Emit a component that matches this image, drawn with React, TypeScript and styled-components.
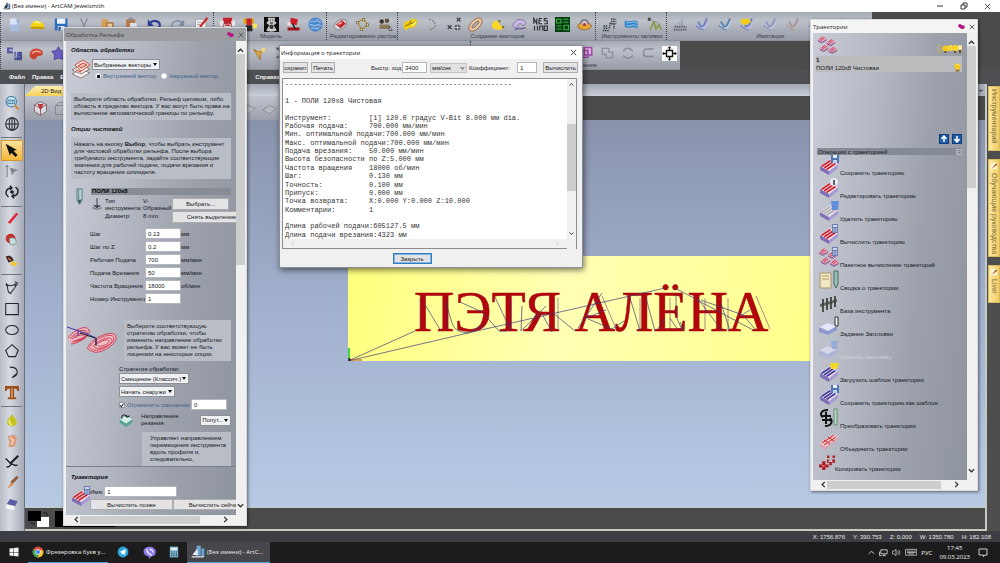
import React, { ReactNode } from 'react';
import styled, { createGlobalStyle, css } from 'styled-components';

const ui = `"Liberation Sans", Arial, sans-serif`;
const segoe = `"Open Sans", "Noto Sans", sans-serif`;

const GlobalStyle = createGlobalStyle`
  *, *::before, *::after { box-sizing: border-box; }
  body { margin: 0; background: #4b4b4b; font: 6px/8px ${ui}; color: #16181c; overflow: hidden; }
  button, input, select { font: inherit; color: inherit; margin: 0; padding: 0; border-radius: 0; }
  h2, h3, p, ul, dl, dd { margin: 0; padding: 0; font-size: inherit; }
  ul { list-style: none; }
  svg { display: block; flex: none; }
`;

/* ---------- drawings ---------- */

const layered = (stripe: string, body: string, extra?: ReactNode) => (
  <>
    <path d="M1 11 11 4l8 4v5l-9 7-9-5z" fill={body} />
    <path d="M1 11 10 16v4L1 15z" fill="#7f6fb5" />
    <path d="M10 16l9-7v4l-9 7z" fill="#a79ad2" />
    <path d="M1 11 11 4l8 5-9 7z" fill="#f4e4ea" />
    <path d="M2.500 11.500l9-6M5 13l9-6M7.500 14.500l9-6" stroke={stripe} strokeWidth="1.600" />
    {extra}
  </>
);
const disk = (
  <>
    <path d="M12 0h8v8h-8z" fill="#4f74b8" />
    <path d="M14 0h4v3h-4z" fill="#e8eefb" />
    <path d="M14 5h4v3h-4z" fill="#c3d0ea" />
  </>
);
const calc = (
  <>
    <path d="M13 0h6v9h-6z" fill="#6d7fb0" />
    <path d="M14 1h4v2h-4z" fill="#cdd8ee" />
    <path d="M14 5h4M14 7h4" stroke="#dfe5f3" strokeDasharray="1 .5" />
  </>
);
const miniLayers = (
  <>
    {[[0, 1], [9, 4], [2, 10], [11, 12]].map(([x, y]) => (
      <g key={`${x}${y}`} transform={`translate(${x} ${y})`}>
        <path d="M0 4 5 0l4 3v2L4 8 0 6z" fill="#9e6d9a" />
        <path d="M0 4 5 0l4 3-5 3z" fill="#f0b6c4" />
        <path d="M1.500 4l4-3M3 5l4-3" stroke="#c42a4c" />
      </g>
    ))}
  </>
);
const simulate = (c1: string, c2: string) => (
  <>
    <path d="M1 11l6-3 4 4 6-7 2 3-7 9-5-1z" fill={c1} />
    <path d="M4 6l4 7 4-2 4-9" stroke={c2} strokeWidth="2.500" fill="none" />
    <path d="M1 11l6 5 5 1" stroke={c2} strokeWidth="1.500" fill="none" />
  </>
);

const glyphs: Record<string, ReactNode> = {
  app: (
    <>
      <path d="M8 2h5v12H8zM14 5h4v12h-4z" fill="#53789c" />
      <path d="M2 14l7-9 1 10zM1 16h17v2H1z" fill="#1d2a3a" />
    </>
  ),
  appLight: (
    <>
      <path d="M8 1h6v14H8zM15 5h4v12h-4z" fill="#6fa4d0" />
      <path d="M2 14l7-9 1 10zM1 16h17v2H1z" fill="#e4ecf2" />
    </>
  ),
  newDoc: (
    <>
      <path d="M4 2h9l4 4v13H4z" fill="#a9bddf" />
      <path d="M4 2h9v8H4z" fill="#dbe5f6" />
      <path d="M13 2v4h4" fill="#8fa6cc" />
    </>
  ),
  open: (
    <>
      <path d="M1 13C2 6 8 3 12 6c4 0 7 4 7 8H1z" fill="#f4d312" />
      <path d="M1 13h18v3H2z" fill="#c79b06" />
      <path d="M6 8c3-2 6-1 8 1" stroke="#fff68c" strokeWidth="2" fill="none" />
    </>
  ),
  save: (
    <>
      <path d="M1 2h17v16H1z" fill="#2f6fc2" />
      <path d="M4 2h11v7H4z" fill="#eef4fd" />
      <path d="M5 12h9v6H5z" fill="#dfe4ea" />
      <path d="M6 13h3v5H6z" fill="#2b4f86" />
    </>
  ),
  cut: <path d="M5 2l6 13M14 2L8 14M5 14a2 2 0 1 0 2 3M14 14a2 2 0 1 1-3 3" stroke="#7d8590" strokeWidth="1.500" fill="none" />,
  copy: (
    <>
      <path d="M2 3h9v11H2z" fill="#d9a05c" />
      <path d="M8 7h10v11H8z" fill="#b5793d" />
      <path d="M10 9h6v7h-6z" fill="#e9c99e" />
    </>
  ),
  paste: (
    <>
      <path d="M3 3h12v15H3z" fill="#b97a4a" />
      <path d="M6 1h6v4H6z" fill="#8c8c94" />
      <path d="M8 8h9v11H8z" fill="#dcdfe8" />
    </>
  ),
  undo: (
    <>
      <path d="M4 8c4-5 14-3 13 4-1 3-3 5-6 5" stroke="#2c3f94" strokeWidth="3" fill="none" />
      <path d="M1 3v9h8z" fill="#2c3f94" />
    </>
  ),
  redo: (
    <>
      <path d="M16 8C12 3 2 5 3 12c1 3 3 5 6 5" stroke="#7f8aa6" strokeWidth="2" fill="none" />
      <path d="M19 3v9h-8z" fill="#7f8aa6" />
    </>
  ),
  notes: (
    <>
      <path d="M2 3h14v15H2z" fill="#f4f4f6" stroke="#8b8f98" />
      <path d="M18 1L8 13" stroke="#cf2a2a" strokeWidth="3" />
      <path d="M4 7h6M4 10h4" stroke="#8b8f98" />
    </>
  ),
  redTool: (
    <>
      <path d="M4 1h12v8H4z" fill="#c8202c" />
      <path d="M0 5h5v7H0zM15 5h5v7h-5z" fill="#e7e7ea" />
      <path d="M5 9h10v10H5z" fill="#eceaea" stroke="#8a2228" />
      <path d="M7 11h6M7 15h6" stroke="#c8202c" strokeWidth="2" />
    </>
  ),
  redYellow: (
    <>
      <path d="M2 2h14v7H2z" fill="#d6a413" />
      <path d="M6 2h7v9H6z" fill="#c4242d" />
      <path d="M5 11h9v8H5z" fill="#2c2a2a" />
      <path d="M14 9h6v6h-6z" fill="#f6e15a" />
    </>
  ),
  teddy: (
    <>
      <path d="M0 0h20v20H0z" fill="#0c0c0c" />
      <path d="M5 1h10l-1 4 3 3-4 3 4 7c-3 2-11 2-14 0l4-7-4-3 3-3z" fill="#c9c9c9" />
      <circle cx="10" cy="13" r="3" fill="#3a3a3a" />
      <path d="M8 4h1M11 4h1M8 8h4" stroke="#111" strokeWidth="1.500" />
    </>
  ),
  lamp: (
    <>
      <path d="M6 1l10 2-2 8-8-2z" fill="#cc1f25" />
      <path d="M2 14h16v4H2z" fill="#a3141b" />
      <path d="M9 9l3 7" stroke="#222" strokeWidth="2" />
      <circle cx="4" cy="9" r="2.500" fill="#f2d9da" />
    </>
  ),
  globeBlue: (
    <>
      <circle cx="10" cy="10" r="9.500" fill="#4f86c9" />
      <path d="M3 7c4-4 5 2 8-2s3 4 6 2M2 11c4-3 6 3 9 0s4 2 7 0M4 15c4-2 7 3 11-1" stroke="#9cc3ee" strokeWidth="1.500" fill="none" />
    </>
  ),
  rasterEdit: (
    <>
      <ellipse cx="10" cy="10" rx="9" ry="6" transform="rotate(-30 10 10)" stroke="#9b9ba2" strokeWidth="2" fill="#dad7da" />
      <path d="M4 10l8-6 5 5-7 6z" fill="#c8232b" />
      <path d="M7 10l5-3" stroke="#f0a9ad" strokeWidth="2" />
    </>
  ),
  nodes: (
    <>
      <path d="M3 7l8-4 6 7-8 7z" fill="none" stroke="#b78a23" strokeWidth="1.500" />
      <path d="M2 6h3v3H2zM10 2h3v3h-3zM15 9h3v3h-3zM7 15h3v3H7z" fill="#e5e2cf" stroke="#6d5a20" />
    </>
  ),
  family: (
    <>
      <circle cx="5" cy="6" r="3" fill="#3d3528" />
      <circle cx="12" cy="5" r="3" fill="#5c5136" />
      <path d="M2 10h13v6H2z" fill="#8a7a55" />
      <path d="M15 12l4 6h-4z" fill="#eee" stroke="#333" />
    </>
  ),
  vectorYellow: (
    <>
      <path d="M1 14V8l5-3h3l3-3 7 2-1 7-6 4-4-1-4 4z" fill="#f1cb0d" />
      <path d="M3 12l6-3 1-4M10 9l7-3" stroke="#7c5e05" strokeWidth="1.200" fill="none" />
      <path d="M12 12l5-6" stroke="#fff38a" strokeWidth="2" />
    </>
  ),
  dots: <path d="M6 3l6 3 2 5-4 5-5 1" stroke="#6c6c45" strokeWidth="1.500" strokeDasharray="2 2" fill="none" />,
  xx: (
    <>
      <path d="M13 1l5 5M18 1l-5 5M1 11l5 5M6 11l-5 5" stroke="#3c4148" strokeWidth="1.500" />
      <circle cx="14" cy="14" r="4" fill="#55595e" />
      <path d="M10 14h8M14 10v8" stroke="#ddd" />
    </>
  ),
  curveRing: (
    <>
      <ellipse cx="10" cy="10" rx="11" ry="6" transform="rotate(-45 10 10)" fill="#e6c6a0" stroke="#8c5a34" />
      <ellipse cx="10" cy="10" rx="6" ry="2" transform="rotate(-45 10 10)" fill="#a9aebb" stroke="#8c5a34" />
    </>
  ),
  yellowBlob: (
    <>
      <path d="M3 9c2-5 8-5 9-1s6 3 6 6-8 4-12 2-4-4-3-7z" fill="#f7d629" />
      <path d="M11 4h3v3h-3zM16 12h3v3h-3z" fill="#7a6f36" />
    </>
  ),
  weave: (
    <>
      <path d="M1 12C4 1 14 1 19 8l-4 4C12 7 7 8 6 16z" fill="#c9b9e2" stroke="#75609c" />
      <path d="M4 17c5-4 9 1 14-3" stroke="#75609c" strokeWidth="2" fill="none" />
    </>
  ),
  nesting: (
    <path
      d="M1 9V2l4 7V2M8 2h4M8 2v7h4M8 5h3M19 2h-4v3h4v4h-4M2 12v6M6 12v6M9 12h4v6M9 12v6M15 12h4v6h-4z"
      stroke="#2b2c30"
      strokeWidth="1.500"
      fill="none"
    />
  ),
  greenGrid: (
    <>
      <path d="M0 0h20v20H0z" fill="#083a10" />
      <path d="M2 3h6v5H2zM11 3h7M11 7h7M2 12h7M2 16h7M12 11h6v6h-6z" stroke="#33b64a" strokeWidth="1.500" fill="none" />
    </>
  ),
  ringGold: (
    <>
      <ellipse cx="10" cy="12" rx="9" ry="5" fill="#e2a53b" stroke="#8a5c14" />
      <path d="M5 10c0-8 10-8 10 0" stroke="#7a7380" strokeWidth="2" fill="#d8c6c6" />
      <circle cx="10" cy="10" r="2" fill="#a33" />
    </>
  ),
  fillA: (
    <path
      d="M1 18h8M2 15h6M2 12h6M12 3h7M12 6h7M12 9h7M9 15c3-2 0-6 3-8M16 9v7"
      stroke="#36403a"
      strokeWidth="1.800"
      strokeDasharray="2 1"
      fill="none"
    />
  ),
  fillB: (
    <>
      <path d="M1 4c6 5 8-2 17 2v9c-9-4-11 2-17-2z" fill="#2e86c9" />
      <path d="M3 7c5 3 7-3 14 1M3 11c5 3 8-3 14 1" stroke="#bfe0f6" fill="none" />
    </>
  ),
  fillC: (
    <>
      <path d="M1 1h4v4H1z" fill="#454b3a" />
      <path d="M4 17l5-10 3 9 4-6 3 7" stroke="#87963b" strokeWidth="2" fill="none" />
      <path d="M7 5l9 3" stroke="#555" strokeDasharray="1 1" />
    </>
  ),
  sim1: (
    <>
      <path d="M1 17h18M2 13h16" stroke="#5e6370" strokeWidth="2.500" strokeDasharray="2 1" />
      <path d="M12 2v9l-5-3" stroke="#97a0ba" strokeWidth="2" fill="none" />
    </>
  ),
  sim2: simulate('#b8bfe0', '#7480c0'),
  sim3: simulate('#b9c6d8', '#5f87b0'),
  sim4: (
    <>
      {simulate('#b8bfe0', '#7480c0')}
      <path d="M1 3l10-1 4 5-9 4-5-3z" fill="#f1cd19" />
    </>
  ),
  sim5: simulate('#c0c5d8', '#8f98bd'),
  sim6: simulate('#c4babd', '#a2979c'),
  sim7: <path d="M1 12c5-5 9 5 17-1l-4 6c-6 2-9-3-13-5z" fill="#b7bdd8" stroke="#7881ab" />,
  blocks: (
    <>
      <path d="M0 2h8v8H0z" fill="#5a5f9e" />
      <path d="M10 8h10v11H10z" fill="#474c8c" />
      <path d="M3 5l10 2-1 9" stroke="#b8bde8" strokeWidth="2" fill="none" />
      <path d="M12 11h6M12 14h6" stroke="#7479b4" />
    </>
  ),
  redLeaf: (
    <>
      <path d="M1 10C3 3 12 1 18 7c2 5-2 7-6 6l-4 5c-5 0-8-4-7-8z" fill="#c9442f" />
      <path d="M4 10c3-4 8-4 12-1" stroke="#f3a99a" strokeWidth="2" fill="none" />
    </>
  ),
  purpleStar: <path d="M10 1l3 5 6 1-4 5 1 6-6-2-6 2 1-6-4-5 6-1z" fill="#6a5fc0" stroke="#3f3892" />,
  goldVec: (
    <>
      <path d="M2 4l7 4 8-3-6 6v7l-4-6z" fill="#e1a83f" stroke="#9b6b18" />
      <circle cx="15" cy="5" r="3" fill="#f5d27c" />
    </>
  ),
  twist: <path d="M3 3c8 0 3 9 12 7M4 16c4-6 9 2 13-3" stroke="#5c616a" strokeWidth="3" fill="none" />,
  cubePink: <path d="M3 6h9v9H3zM7 2h10v10H7z" stroke="#a04aa8" strokeWidth="2" fill="#dcb3e0" />,
  join: <path d="M3 3h9v5h5v8H8v-5H3z" stroke="#80858f" strokeWidth="1.500" fill="none" />,
  wave: <path d="M3 7c5-7 9-3 13 0M3 13c5 6 9 3 13 0" stroke="#868b95" strokeWidth="2" fill="none" />,
  cshape: <path d="M17 4H7c-5 0-5 10 0 10h10" stroke="#868b95" strokeWidth="2" fill="none" />,
  center: (
    <>
      <path d="M0 0h20v20H0z" fill="#fbfbfb" />
      <path d="M6 6h8v8H6zM10 1v4M10 15v4M1 10h4M15 10h4" stroke="#111" strokeWidth="1.800" fill="none" />
      <path d="M8 3l2-2 2 2M8 17l2 2 2-2M3 8l-2 2 2 2M17 8l2 2-2 2" stroke="#111" fill="none" />
    </>
  ),
  view3d: (
    <>
      <path d="M2 5l8-4 8 4v9l-8 5-8-5z" fill="#d9dce2" stroke="#7a4a4e" />
      <path d="M10 10v9M2 5l8 5 8-5" stroke="#7a4a4e" fill="none" />
      <path d="M6 4h8l-4 9z" fill="#c0303c" />
    </>
  ),
  cube: <path d="M2 6h11v12H2zM2 6l5-4h11v12l-5 4M13 6l5-4" stroke="#80858f" strokeWidth="1.200" fill="none" />,
  slab: <path d="M1 12l9-6 9 4-9 7z" fill="#b4b9bd" stroke="#7f8588" />,
  zoom: (
    <>
      <circle cx="9" cy="8" r="7.500" fill="#cfe2f0" stroke="#4a86a8" strokeWidth="1.500" />
      <path d="M4 6h10v5H4zM7 6v5M11 6v5" stroke="#2e79a0" strokeWidth="1.200" fill="none" />
      <path d="M14 13l5 6" stroke="#d78a35" strokeWidth="3" />
    </>
  ),
  globe: (
    <g fill="none" stroke="#23252a" strokeWidth="1.500">
      <circle cx="10" cy="10" r="9" />
      <ellipse cx="10" cy="10" rx="4" ry="9" />
      <path d="M1 10h18M10 1v18" />
    </g>
  ),
  pointer: <path d="M1 1l16 9-5 1 6 6-3 3-6-6-2 4z" fill="#111" />,
  pointerGrey: (
    <>
      <path d="M3 2v17M1 4l2-2 2 2" stroke="#7d828b" strokeWidth="1.500" fill="none" />
      <path d="M7 5l12 4-6 2-3 5z" fill="#7d828b" />
    </>
  ),
  transform: (
    <g stroke="#1d1e21" fill="none" strokeWidth="2">
      <path d="M5 17C-1 13 1 5 9 4M15 3c6 4 4 12-4 13" />
      <path d="M10 7v6M7 10h6" />
      <path d="M7 1l3 3-3 3M13 13l-3 3 3 3" />
    </g>
  ),
  redPencil: (
    <>
      <path d="M16 1l3 2L7 17l-3-2z" fill="#e0243a" />
      <path d="M4 15l3 2-4 2z" fill="#f2cfae" />
    </>
  ),
  paint: (
    <>
      <circle cx="8" cy="8" r="7" fill="#c9302c" />
      <path d="M6 8c6-3 10 0 10 5 0 4-7 5-9 3z" fill="#c7ddd8" stroke="#5d7f78" />
    </>
  ),
  brush: (
    <>
      <path d="M1 4c5-4 11 0 11 6L5 12z" fill="#3a2320" />
      <path d="M10 10l8 3-3 5-8-3z" fill="#f0c93a" />
      <path d="M4 6l5 3" stroke="#c96a5a" strokeWidth="2" />
    </>
  ),
  vector: <path d="M2 5c5 3 9 2 13-1M2 5c4 3-1 10 6 13 2-6 8-6 7-14M14 1l4 2-3 5M2 3v4" stroke="#2a2c30" strokeWidth="1.500" fill="none" />,
  rect: <path d="M1 2h18v16H1z" stroke="#23252a" strokeWidth="1.500" fill="none" />,
  ellipse: <ellipse cx="10" cy="10" rx="9" ry="6.500" stroke="#23252a" strokeWidth="1.500" fill="none" />,
  polygon: <path d="M10 1l9 8-4 9H5L1 9z" stroke="#23252a" strokeWidth="1.500" fill="none" />,
  arc: <path d="M7 3c14 0 13 12 3 15l7-6" stroke="#23252a" strokeWidth="1.500" fill="none" />,
  typeTool: (
    <>
      <path d="M0 0h20v7h-2l-2-3h-3v12h3v3H4v-3h3V4H4L2 7H0z" fill="#9c4f1c" />
      <path d="M9 3h2v14H9z" fill="#e6a05c" />
    </>
  ),
  drop: (
    <>
      <path d="M10 1c2 5 7 8 7 12 0 8-14 8-14 0 0-4 5-7 7-12z" fill="#c8c41f" />
      <path d="M7 10c-2 3 0 6 3 7" stroke="#f7f6a8" strokeWidth="2" fill="none" />
    </>
  ),
  hand: (
    <>
      <path d="M4 3l10-2 3 7-3 10-9 1 1-8z" fill="#d99a7c" />
      <path d="M7 5l5 4-3 6" stroke="#f4cfb6" strokeWidth="2.500" fill="none" />
    </>
  ),
  ink: (
    <>
      <path d="M19 1L7 13" stroke="#1d1d20" strokeWidth="3" />
      <path d="M1 5l6 6M2 17c6 1 5-4 8-4s4 4 8 1" stroke="#1d1d20" strokeWidth="2" fill="none" />
    </>
  ),
  knife: (
    <>
      <path d="M18 1L9 10" stroke="#8f5a38" strokeWidth="4" />
      <path d="M9 9l3 3-9 7z" fill="#e08a4a" />
    </>
  ),
  eraser: (
    <>
      <path d="M7 3l11 3-4 8L2 11z" fill="#5a5fa6" />
      <path d="M2 10l12 3-1 6L1 16z" fill="#f4f4f6" />
    </>
  ),
  sheets: (
    <g strokeWidth="1">
      <path d="M1 15l9-5 9 4-9 5z" fill="#f4efec" stroke="#8b7f80" />
      <path d="M1 11l9-5 9 4-9 5z" fill="#f3e2d8" stroke="#8b7f80" />
      <path d="M4 6l8-5 7 5-9 6z" fill="#fbe9e2" stroke="#cc5248" />
      <path d="M7 7l5-3 4 2-6 3zM5 11l5 2" fill="#f4bdb2" stroke="#cc3f36" />
    </g>
  ),
  pen: (
    <>
      <path d="M7 1h6v13l-3 5-3-5z" fill="#b9d3d6" stroke="#4d7177" />
      <path d="M9 2v11M8 14h4l-2 5z" stroke="#4d7177" fill="#35545a" />
    </>
  ),
  drill: (
    <>
      <path d="M9 0h2v12H9z" fill="#4f545c" />
      <path d="M3 12h14l-7 5z" fill="#3c4047" />
      <path d="M2 16l8 3 8-3" stroke="#777c86" strokeWidth="2" fill="none" />
    </>
  ),
  box3d: (
    <>
      <path d="M1 9l9-5 9 5v5l-9 6-9-6z" fill="#5aa493" />
      <path d="M1 9l9-5 9 5-9 6z" fill="#d7f0e7" />
      <path d="M4 8C3 2 11 1 12 6M12 6l3-2M12 6l-3-2" stroke="#1c2c28" strokeWidth="1.500" fill="none" />
    </>
  ),
  saveTp: layered('#c8232f', '#b8a8d8', disk),
  editTp: layered('#c8232f', '#b8a8d8', <><circle cx="15" cy="4" r="4" fill="#e6e9ef" /><path d="M15 2v5" stroke="#333" strokeWidth="1.500" /></>),
  delTp: layered('#a9aeb8', '#cfd2dc', <path d="M12 0h8l-1 9h-6z" fill="#5f8fd8" />),
  calcTp: layered('#c8232f', '#b8a8d8', calc),
  loadTp: layered('#3d3a9c', '#a9b0e6', <path d="M11 1h9l-2 6h-6z" fill="#f1d622" />),
  tplTp: layered('#3d3a9c', '#a9b0e6', disk),
  batchTp: <>{miniLayers}{calc}</>,
  multi: miniLayers,
  summary: (
    <>
      <path d="M1 3h11v15H1z" fill="#efe6c4" stroke="#a8966a" />
      <path d="M3 6h7M3 9h7" stroke="#b89c64" />
      <path d="M15 1h4v13l-2 4-2-4z" fill="#9cc0b4" stroke="#44695e" />
    </>
  ),
  tooldb: (
    <>
      <path d="M1 11l17-5v3L1 14z" fill="#62675f" />
      <path d="M4 6v13M8 5v12M12 4v12M16 3v11" stroke="#3e443d" strokeWidth="1.800" />
    </>
  ),
  stock: (
    <>
      <path d="M0 11l9-4 9 3v4l-9 5-9-3z" fill="#8f97cf" />
      <path d="M0 11l9-4 9 3-9 5z" fill="#e4e6f6" />
      <path d="M16 1h3v9h-3z" fill="#eee" stroke="#333" />
    </>
  ),
  stockOff: (
    <g opacity=".7">
      <path d="M0 11l9-4 9 3v4l-9 5-9-3z" fill="#a8b1de" />
      <path d="M0 11l9-4 9 3-9 5z" fill="#dfe2f2" />
      <path d="M12 2h7l-1 8h-5z" fill="#86a7e0" />
    </g>
  ),
  transformTp: (
    <>
      <g stroke="#111" fill="none" strokeWidth="2">
        <path d="M9 2C2 2 0 7 4 9M6 18c7 0 8-5 5-8M2 8h10M3 12h10M7 4v12" />
      </g>
      <path d="M15 1h3v16h-3z" fill="#b8dcc6" stroke="#5f8d72" />
    </>
  ),
  mergeTp: (
    <>
      <path d="M1 12L14 3l5 3v3L6 19l-5-3z" fill="#d5a8b4" />
      <path d="M1 12L14 3l5 3L6 16z" fill="#f3c8c8" />
      <path d="M3 12l12-8M5 14l12-8M5 9l6 4M9 6l6 4" stroke="#c8232f" />
    </>
  ),
  copyTp: (
    <>
      <path d="M4 9h4v4h4v4H8v3H4v-3H0v-4h4z" fill="#b01c20" />
      <path d="M10 2h3v3h-3zM17 2h3v3h-3zM10 7h3v3h3V7h4v4h-4v3h-3v-3h-3z" fill="#b01c20" />
      <path d="M4 15h4M12 9h5" stroke="#fff" strokeDasharray="2 1" />
    </>
  ),
  bulb: (
    <>
      <path d="M10 1c9 0 8 8 4 11v3H6v-3C2 9 1 1 10 1z" fill="#f6c81c" />
      <path d="M6 15h8v4H6z" fill="#8a6d2c" />
      <path d="M7 4c2-2 5-1 6 1" stroke="#fff8b0" strokeWidth="2" fill="none" />
    </>
  ),
  bulbs: (
    <>
      <path d="M2 3h5v13H2z" fill="none" stroke="#d1b546" strokeWidth="1.500" />
      <circle cx="17" cy="9" r="6" fill="#f4cb1f" />
      <circle cx="27" cy="8" r="6" fill="#f6d83c" />
      <circle cx="37" cy="8" r="6" fill="#f8d428" />
      <circle cx="46" cy="7" r="5" fill="#fbe89b" />
      <path d="M15 14h4v4h-4zM34 14h4v4h-4zM44 12h4v6h-4z" fill="#6d4c1c" />
    </>
  ),
  pin: <path d="M1 6c2-5 8-4 9 0l9 2v7l-8 3-5-4C1 13 0 10 1 6z" fill="#b5178b" />,
  chrome: (
    <>
      <circle cx="10" cy="10" r="9" fill="#dd4b3e" />
      <path d="M2.200 5.500A9 9 0 0 0 9 19l4-7z" fill="#3aa757" />
      <path d="M18.500 7A9 9 0 0 1 9 19l4-7-1-5z" fill="#fbc116" />
      <circle cx="10" cy="10" r="4.500" fill="#fff" />
      <circle cx="10" cy="10" r="3.500" fill="#4285f4" />
    </>
  ),
  telegram: (
    <>
      <circle cx="10" cy="10" r="9" fill="#2ba3dd" />
      <path d="M4 10l11-5-2 10-4-2-1 2-1-4z" fill="#fff" />
    </>
  ),
  viber: (
    <>
      <path d="M10 1c13 0 12 15 3 15l-4 4v-4C-2 15-2 1 10 1z" fill="#8e7be8" />
      <path d="M6 5c0 5 4 8 8 9M10 5c3 0 5 2 5 5" stroke="#fff" strokeWidth="1.800" fill="none" />
    </>
  ),
  calcApp: (
    <>
      <path d="M3 1h14v18H3z" fill="#7fb6c9" />
      <path d="M5 3h10v4H5z" fill="#e8f4f8" />
      <path d="M5 10h10M5 13h10M5 16h10" stroke="#23586c" strokeWidth="2" strokeDasharray="2 2" />
    </>
  ),
  start: <path d="M1 3l8-1v8H1zM10 2l9-1v9h-9zM1 11h8v7l-8-1zM10 11h9v8l-9-1z" fill="#f4f4f4" />,
  monitor: <path d="M4 4h14v9H4zM8 17h7M11 13v4M1 8v9h5" stroke="#e4e4e4" strokeWidth="1.800" fill="none" />,
  volume: <path d="M1 7h3l5-4v14l-5-4H1zM12 7c2 2 2 4 0 6M15 4c3 4 3 8 0 12" stroke="#e4e4e4" strokeWidth="1.500" fill="none" />,
  keyboard: <path d="M1 3h25v13H1zM4 7h20M4 10h20M7 13h13" stroke="#e4e4e4" strokeWidth="1.500" fill="none" />,
  notice: <path d="M2 2h16v12h-4l-3 3v-3H2z" stroke="#e4e4e4" strokeWidth="1.800" fill="none" />,
  note: (
    <>
      <path d="M2 2h16v16H2z" fill="#fff6cf" />
      <path d="M4 17L16 3l2 4z" fill="#a8322a" />
    </>
  ),
};

const Glyph = ({ name, size = 15, vw = 20 }: { name: string; size?: number; vw?: number }) => (
  <svg width={(size * vw) / 20} height={size} viewBox={`0 0 ${vw} 20`} aria-hidden="true">
    {glyphs[name]}
  </svg>
);

const Stroke = ({ d, size = 8, color = '#333', weight = 1 }: { d: string; size?: number; color?: string; weight?: number }) => (
  <svg width={size} height={size} viewBox="0 0 8 8" fill="none" stroke={color} strokeWidth={weight} aria-hidden="true">
    <path d={d} />
  </svg>
);
const arrows = {
  up: 'M1 5.500 4 2.500l3 3',
  down: 'M1 2.500 4 5.500l3-3',
  left: 'M5.500 1 2.500 4l3 3',
  right: 'M2.500 1 5.500 4l-3 3',
  close: 'M1 1l6 6M7 1 1 7',
};

/* ---------- frame ---------- */

const Screen = styled.div`
  position: relative;
  display: flex;
  flex-direction: column;
  height: 100vh;
  overflow: hidden;
`;
const TitleBar = styled.header`
  display: flex;
  align-items: center;
  height: 12px;
  flex: none;
  padding: 0 9px 0 3px;
  gap: 1px;
  background: #fff;
  color: #111;
  font-family: ${segoe};
`;
const WindowButtons = styled.div`
  display: flex;
  gap: 16px;
  margin-left: auto;
`;
const PlainButton = styled.button`
  display: grid;
  place-items: center;
  border: 0;
  background: none;
`;
const ToolRow = styled.div<{ $w: string }>`
  display: flex;
  flex: none;
  width: ${(p) => p.$w};
  height: 29px;
  border-bottom: 1px solid #8b909b;
  background: linear-gradient(#a3a8b2, #bcc1ca 30%, #a6abb5 70%, #989da8);
`;
const ToolGroup = styled.div<{ $w: number }>`
  width: ${(p) => p.$w}px;
  flex: none;
  display: flex;
  flex-direction: column;
  padding: 4px 0 0 2px;
  border-left: 1px dotted #3b3e44;
`;
const ToolIcons = styled.div`
  display: flex;
  justify-content: space-around;
  align-items: center;
  height: 16px;
`;
const GroupLabel = styled.span`
  text-align: center;
  color: #3d4148;
  line-height: 8px;
  white-space: nowrap;
`;
const MenuBar = styled.nav`
  display: flex;
  gap: 7px;
  flex: none;
  height: 14px;
  padding-left: 9px;
  background: #4e4f52;
  button {
    border: 0;
    background: none;
    color: #f2f2f2;
    font-weight: bold;
  }
`;
const MenuGap = styled.span`
  width: 169px;
`;
const Workspace = styled.main`
  display: flex;
  flex: 1;
  min-height: 0;
`;
const Palette = styled.aside`
  width: 25px;
  flex: none;
  display: flex;
  flex-direction: column;
  justify-content: space-between;
  padding: 6px 2px 17px 1px;
  border-right: 1px solid #6b6f78;
  background: linear-gradient(90deg, #b9bdc7, #d6d9e0 40%, #a5aab6);
`;
const PaletteGroup = styled.div`
  padding-top: 2px;
  & + & {
    border-top: 1px solid #6f747e;
  }
`;
const PaletteButton = styled(PlainButton)<{ $on?: boolean }>`
  width: 22px;
  height: 21px;
  ${(p) => p.$on && css`background: linear-gradient(#fbe29c, #f5b73c); border: 1px solid #d69a2e;`}
`;
const Document = styled.section`
  flex: 1;
  min-width: 0;
  display: flex;
  flex-direction: column;
  border-right: 2px solid #c6cac0;
  border-bottom: 2px solid #c6cac0;
`;
const DocTabs = styled.div`
  display: flex;
  justify-content: space-between;
  align-items: end;
  flex: none;
  height: 12px;
  background: linear-gradient(#a3a8b3, #c9cfd8);
`;
const DocTab = styled.button`
  height: 10px;
  width: 80px;
  padding-left: 16px;
  border: 0;
  text-align: left;
  background: linear-gradient(#fdeeb0, #f8d259);
  clip-path: polygon(0 100%, 10px 0, 100% 0, 100% 100%);
`;
const TabMenu = styled(PlainButton)`
  width: 9px;
  height: 11px;
  background: #a9aebb;
`;
const ViewBar = styled.div`
  flex: none;
  height: 24px;
  background: #4b4b4b;
`;
const ViewTools = styled.div`
  display: flex;
  align-items: center;
  gap: 6px;
  width: 50%;
  height: 24px;
  padding-left: 8px;
  background: linear-gradient(#c0c4cd, #9a9fab);
`;
const ViewGap = styled.span`
  width: 160px;
`;
const Canvas = styled.div`
  position: relative;
  flex: 1;
  min-height: 0;
  overflow: hidden;
  background: linear-gradient(#8a93ac, #a0afcb 45%, #b7cae4);
`;
const Relief = styled.svg`
  position: absolute;
  left: 323px;
  top: 136px;
  background: linear-gradient(100deg, #ffff7c, #ffffb4 45%, #ffff9c 75%, #ffff86);
`;
const ColourBar = styled.div`
  flex: none;
  height: 22px;
  display: flex;
  gap: 6px;
  padding: 3px 3px;
  border-top: 1px solid #c6cac0;
  background: #4b4b4b;
`;
const SideTabs = styled.aside`
  width: 13px;
  flex: none;
  display: flex;
  flex-direction: column;
  gap: 8px;
  padding: 2px 0 0 1px;
  background: #4e4e4e;
`;
const SideTab = styled.button<{ $h: number }>`
  display: flex;
  align-items: center;
  gap: 3px;
  height: ${(p) => p.$h}px;
  width: 12px;
  padding: 2px 0;
  border: 1px solid #d9bb63;
  background: linear-gradient(90deg, #fbe7a4, #f3cd62);
  color: #7b6a3a;
  writing-mode: vertical-rl;
  font: 7px/8px ${ui};
  white-space: nowrap;
`;
const StatusBar = styled.footer`
  display: flex;
  justify-content: flex-end;
  align-items: center;
  gap: 8px;
  flex: none;
  height: 11px;
  padding-right: 9px;
  background: #3d3e43;
  color: #e6e6e6;
`;
const TaskBar = styled.footer`
  display: flex;
  align-items: center;
  flex: none;
  height: 21px;
  background: #1c1c1c;
  color: #f0f0f0;
  font-family: ${segoe};
`;
const TaskButton = styled.button<{ $w: number; $state?: 'open' | 'active' }>`
  display: flex;
  align-items: center;
  justify-content: ${(p) => (p.$state ? 'flex-start' : 'center')};
  gap: 2px;
  width: ${(p) => p.$w}px;
  height: 21px;
  padding: 0 4px;
  border: 0;
  border-bottom: 1px solid ${(p) => (p.$state ? '#5a9fd8' : 'transparent')};
  background: ${(p) => (p.$state === 'active' ? '#45474a' : 'none')};
  white-space: nowrap;
`;
const Tray = styled.div`
  display: flex;
  align-items: center;
  gap: 4px;
  margin-left: auto;
  padding-right: 12px;
`;
const Clock = styled.time`
  margin: 0 4px 0 3px;
  text-align: center;
  line-height: 9px;
`;

/* ---------- shared controls ---------- */

const Button = styled.button<{ $w?: number; $h?: number; $focus?: boolean }>`
  flex: none;
  width: ${(p) => p.$w}px;
  height: ${(p) => p.$h ?? 11}px;
  border: 1px solid ${(p) => (p.$focus ? '#2f7fc8' : '#adadad')};
  ${(p) => p.$focus && css`box-shadow: inset 0 0 0 1px #7fb2de;`}
  background: #e3e3e5;
  white-space: nowrap;
  overflow: hidden;
  line-height: 8px;
`;
const Field = styled.input<{ $w: number }>`
  width: ${(p) => p.$w}px;
  height: 11px;
  padding: 0 2px;
  border: 1px solid #b4b7bd;
  background: #fff;
`;
const SelectBox = styled.span<{ $w: number; $flat?: boolean }>`
  display: inline-grid;
  align-items: center;
  width: ${(p) => p.$w}px;
  height: ${(p) => (p.$flat ? 10 : 11)}px;
  select,
  &::after {
    grid-area: 1 / 1;
  }
  select {
    appearance: none;
    width: 100%;
    height: 100%;
    padding: 0 1px;
    border: 1px solid ${(p) => (p.$flat ? '#c2c2c2' : '#8d9097')};
    background: ${(p) => (p.$flat ? '#e1e1e1' : '#eff0f2')};
  }
  &::after {
    content: '';
    justify-self: end;
    margin-right: 3px;
    pointer-events: none;
    ${(p) =>
      p.$flat
        ? css`width: 3px; height: 3px; border: solid #666; border-width: 0 1px 1px 0; transform: rotate(45deg);`
        : css`border: 2px solid transparent; border-top: 3px solid #111; border-bottom: 0;`}
  }
`;
const Select = ({ w, value, label, flat }: { w: number; value: string; label: string; flat?: boolean }) => (
  <SelectBox $w={w} $flat={flat}>
    <select aria-label={label} defaultValue={value}>
      <option>{value}</option>
    </select>
  </SelectBox>
);

const Panel = styled.section`
  position: absolute;
  display: grid;
  grid-template-columns: 1fr 9px;
  grid-template-rows: 13px 1fr 9px;
  padding: 0 1px 1px 2px;
  background: #f0f0f0;
  border: 1px solid #d9dbdf;
  box-shadow: 1px 1px 3px rgba(0, 0, 0, 0.5);
`;
const ProcessPanel = styled(Panel)`
  left: 63px;
  top: 27px;
  bottom: 37px;
  width: 184px;
`;
const ToolpathPanel = styled(Panel)`
  right: 22px;
  top: 19px;
  bottom: 72px;
  width: 168px;
`;
const PanelTitle = styled.div<{ $dim?: boolean }>`
  grid-column: 1 / -1;
  display: flex;
  align-items: center;
  gap: 4px;
  margin: 0 -1px 0 -2px;
  padding: 0 2px 0 2px;
  background: ${(p) => (p.$dim ? '#9c9ea2' : '#f4f4f5')};
  color: ${(p) => (p.$dim ? '#3c3d40' : '#222')};
  font-family: ${segoe};
  h2 {
    flex: 1;
    font-weight: normal;
  }
`;
const PanelBody = styled.div`
  min-width: 0;
  min-height: 0;
  overflow: hidden;
  background: linear-gradient(95deg, #c9ccd6, #b4b8c3 35%, #9ca1ac 65%, #8f959f);
`;
const ScrollTrack = styled.div<{ $row?: boolean }>`
  display: flex;
  flex-direction: ${(p) => (p.$row ? 'row' : 'column')};
  justify-content: space-between;
  align-items: center;
  ${(p) => (p.$row ? 'padding: 0 7px;' : 'padding: 6px 0;')}
  background: #f0f0f0;
`;
const Thumb = styled.div<{ $row?: boolean; $size: string }>`
  ${(p) =>
    p.$row
      ? css`width: ${p.$size}; height: 8px; margin-right: auto;`
      : css`height: ${p.$size}; width: 9px; margin-bottom: auto;`}
  background: #cdcdcd;
`;
const Scroll = ({ row, size, color }: { row?: boolean; size: string; color?: string }) => (
  <ScrollTrack $row={row}>
    <Stroke d={row ? arrows.left : arrows.up} color={color} size={7} weight={1.500} />
    <Thumb $row={row} $size={size} />
    <Stroke d={row ? arrows.right : arrows.down} color={color} size={7} weight={1.500} />
  </ScrollTrack>
);

/* ---------- relief processing panel ---------- */

const Section = styled.div<{ $pt?: number }>`
  padding: ${(p) => p.$pt ?? 5}px 5px 0;
`;
const Heading = styled.h3`
  font-weight: bold;
  font-style: italic;
  color: #0c0d10;
`;
const Info = styled.div<{ $indent?: number; $ml?: number }>`
  margin: 5px 0 0 ${(p) => p.$ml ?? 0}px;
  padding: 3px 0 3px ${(p) => p.$indent ?? 3}px;
  line-height: 7px;
  white-space: pre;
  background: #b9bdc6;
  overflow: hidden;
`;
const Columns = styled.div<{ $first: number; $mt?: number }>`
  display: grid;
  grid-template-columns: ${(p) => p.$first}px 1fr;
  margin-top: ${(p) => p.$mt ?? 0}px;
  & > * {
    min-width: 0;
  }
`;
const Radios = styled.div`
  display: flex;
  gap: 5px;
  margin: 2px 0 8px 3px;
`;
const Check = styled.label`
  display: flex;
  align-items: center;
  gap: 2px;
  height: 8px;
  color: #44658f;
  white-space: nowrap;
  input {
    appearance: none;
    display: grid;
    place-items: center;
    width: 6px;
    height: 6px;
    background: #fff;
    border: 1px solid #8f959f;
  }
  input[type='radio'] {
    border-radius: 3px;
    border-color: #e6e8ec;
  }
  input:checked::after {
    content: '';
    width: 3px;
    height: 3px;
    background: #15181d;
  }
  input[type='checkbox']:checked::after {
    width: 2px;
    height: 4px;
    background: none;
    border: solid #15181d;
    border-width: 0 1px 1px 0;
    transform: rotate(40deg);
  }
`;
const ToolName = styled.h3`
  height: 7px;
  padding-left: 1px;
  line-height: 7px;
  background: #878c95;
  color: #060708;
`;
const ToolCard = styled.div`
  display: grid;
  grid-template-columns: 14px 38px 29px 1fr;
  margin: 3px -5px 0 0;
  line-height: 7px;
`;
const Stack = styled.div<{ $gap?: number }>`
  display: flex;
  flex-direction: column;
  align-items: flex-start;
  gap: ${(p) => p.$gap ?? 1}px;
`;
const Param = styled.label`
  display: grid;
  grid-template-columns: 55px 36px 1fr;
  align-items: center;
  height: 13px;
  white-space: nowrap;
`;
const Row = styled.div<{ $gap?: number; $mt?: number }>`
  display: flex;
  align-items: center;
  gap: ${(p) => p.$gap ?? 2}px;
  margin-top: ${(p) => p.$mt ?? 0}px;
  white-space: nowrap;
`;
const CutLabel = styled.span`
  width: 64px;
  padding-left: 6px;
  line-height: 7px;
`;
const Divider = styled.hr`
  margin: 0 0 6px;
  border: 0;
  border-top: 1px solid #7b808a;
`;
const StrategyDrawing = styled.svg`
  margin: 11px 0 0 -5px;
`;

const params: [string, string, string][] = [
  ['Шаг', '0.13', 'мм'],
  ['Шаг по Z', '0.2', 'мм'],
  ['Рабочая Подача', '700', 'мм/мин'],
  ['Подача Врезания', '50', 'мм/мин'],
  ['Частота Вращения', '18000', 'об/мин'],
  ['Номер Инструмента', '1', ''],
];

const ReliefProcessing = () => (
  <ProcessPanel>
    <PanelTitle $dim>
      <h2>Обработка Рельефа</h2>
      <PlainButton aria-label="Закрепить"><Glyph name="pin" size={7} /></PlainButton>
      <PlainButton aria-label="Закрыть панель"><Stroke d={arrows.close} size={6} color="#444" /></PlainButton>
    </PanelTitle>
    <PanelBody>
      <Section>
        <Heading>Область обработки</Heading>
        <Columns $first={21} $mt={5}>
          <Glyph name="sheets" size={20} />
          <div>
            <Row><Select w={68} value="Выбранные векторы" label="Область" /></Row>
            <Radios>
              <Check><input type="radio" name="side" defaultChecked />Внутренний вектор</Check>
              <Check><input type="radio" name="side" />Наружный вектор</Check>
            </Radios>
          </div>
        </Columns>
        <Info>{'Выберите область обработки. Рельеф целиком, либо\nобласть в пределах вектора. У вас могут быть права на\nвычисление автоматической границы по рельефу.'}</Info>
      </Section>
      <Section>
        <Heading>Опции чистовой</Heading>
        <Info>
          <div>Нажать на кнопку <b>Выбор</b>, чтобы выбрать инструмент</div>
          <div>{'для чистовой обработки рельефа. После выбора\nтребуемого инструмента, задайте соответствующие\nзначения для рабочей подачи, подачи врезания и\nчастоту вращения шпинделя.'}</div>
        </Info>
        <Columns $first={20} $mt={9}>
          <Glyph name="pen" size={17} />
          <div>
            <ToolName>ПОЛИ 120x8</ToolName>
            <ToolCard>
              <Glyph name="drill" size={12} />
              <Stack><span>Тип<br />инструмента:</span><span>Диаметр:</span></Stack>
              <Stack><span>V-<br />Образный</span><span>8 mm</span></Stack>
              <Stack>
                <Button $w={57} $h={12}>Выбрать...</Button>
                <Button $w={79} $h={12}>Снять выделение</Button>
              </Stack>
            </ToolCard>
          </div>
        </Columns>
        <Columns $first={19} $mt={4}>
          <span />
          <div>
            {params.map(([name, value, unit]) => (
              <Param key={name}>{name}<Field $w={36} defaultValue={value} /><span>{unit}</span></Param>
            ))}
          </div>
        </Columns>
      </Section>
      <Section $pt={10}>
        <Columns $first={53}>
          <StrategyDrawing width="52" height="30" viewBox="0 0 52 30" aria-label="Стратегия">
            <g fill="none" stroke="#c8243c" strokeWidth=".8">
              <path d="M2 12C8 4 20-2 23 4s-12 14-18 14" fill="#e7b6be" />
              <path d="M4 13c6-7 14-11 17-7s-9 10-15 10M6 13c5-5 12-8 14-5s-7 7-12 7M9 12c3-3 8-4 9-2s-4 3-7 4" />
              <path d="M23 19c6-9 26-16 27-8S34 28 28 26s-8-3-5-7z" fill="#efc0c6" />
              <path d="M25 19c6-8 22-13 23-7S33 26 28 24s-6-2-3-5zM28 19c5-5 17-10 18-5S33 24 30 22s-4-1-2-3zM31 18c4-3 11-6 12-3s-8 6-11 5" />
            </g>
            <path d="M1 1l18 6 11 5v7M12 10V4" stroke="#4432b8" fill="none" />
            <path d="M14 7l15 5M30 12v8" stroke="#222" fill="none" />
          </StrategyDrawing>
          <Info>{'Выберите соответствующую\nстратегию обработки, чтобы\nизменить направление обработки\nрельефа. У вас может не быть\nлицензии на некоторые опции.'}</Info>
        </Columns>
        <Columns $first={48} $mt={4}>
          <span />
          <div>
            <div>Стратегия обработки:</div>
            <Stack $gap={2}>
              <Select w={70} value="Смещение (Классич.)" label="Стратегия обработки" />
              <Select w={56} value="Начать снаружи" label="Начало" />
            </Stack>
            <Row $mt={2} $gap={1}>
              <Check><input type="checkbox" defaultChecked />Ограничить смещение</Check>
              <Field $w={36} defaultValue="0" aria-label="Смещение" />
            </Row>
            <Row $mt={3} $gap={2}>
              <Glyph name="box3d" size={14} />
              <CutLabel>Направление<br />резания:</CutLabel>
              <Select w={31} value="Попут..." label="Направление резания" />
            </Row>
            <Info $indent={8} $ml={23}>{'Управляет направлением\nперемещения инструмента\nвдоль профиля и,\nследовательно,'}</Info>
          </div>
        </Columns>
      </Section>
      <Divider />
      <Section $pt={0}>
        <Heading>Траектория</Heading>
        <Columns $first={19} $mt={5}>
          <Glyph name="calcTp" size={20} />
          <div>
            <Row as="label" $gap={1}>Имя: <Field $w={73} defaultValue="1" /></Row>
            <Row $mt={2} $gap={0}>
              <Button $w={83}>Вычислить позже</Button>
              <Button $w={83}>Вычислить сейчас</Button>
            </Row>
          </div>
        </Columns>
      </Section>
    </PanelBody>
    <Scroll size="211px" />
    <Scroll row size="120px" />
  </ProcessPanel>
);

/* ---------- toolpaths panel ---------- */

const PathTop = styled.div`
  display: flex;
  justify-content: space-between;
  align-items: flex-end;
  padding: 2px 5px 2px 5px;
`;
const PathItem = styled.div`
  display: flex;
  justify-content: space-between;
  align-items: flex-end;
  margin: 0 5px 62px 3px;
  height: 16px;
  background: #bbbcbe;
`;
const MoveButtons = styled.div`
  display: flex;
  justify-content: flex-end;
  gap: 3px;
  padding: 0 5px 4px;
  button {
    width: 10px;
    height: 10px;
    background: #1f5da8;
    border: 1px solid #103c78;
  }
`;
const OpsHeader = styled.h3`
  display: flex;
  justify-content: space-between;
  align-items: center;
  margin: 0 5px 0 4px;
  padding-left: 1px;
  height: 7px;
  font-weight: normal;
  background: #858b94;
  button {
    width: 6px;
    height: 6px;
    background: #aeb2b9;
  }
`;
const OpButton = styled.button<{ $off?: boolean; $tight?: boolean }>`
  display: flex;
  align-items: flex-end;
  gap: ${(p) => (p.$tight ? 0 : 1)}px;
  height: ${(p) => (p.$tight ? 20 : 23)}px;
  padding: 0 0 1px 6px;
  border: 0;
  background: none;
  color: ${(p) => (p.$off ? '#ced1d8' : 'inherit')};
  white-space: nowrap;
  svg {
    align-self: flex-start;
  }
`;

const operations: [string, string][] = [
  ['saveTp', 'Сохранить траекторию'],
  ['editTp', 'Редактировать траекторию'],
  ['delTp', 'Удалить траекторию'],
  ['calcTp', 'Вычислить траекторию'],
  ['batchTp', 'Пакетное вычисление траекторий'],
  ['summary', 'Сводка о траектории'],
  ['tooldb', 'База инструмента'],
  ['stock', 'Задание Заготовки'],
  ['stockOff', 'Удалить Заготовку'],
  ['loadTp', 'Загрузить шаблон траектории'],
  ['tplTp', 'Сохранить траекторию как шаблон'],
  ['transformTp', 'Преобразовать траектории'],
  ['mergeTp', 'Объединить траектории'],
];

const Toolpaths = () => (
  <ToolpathPanel>
    <PanelTitle>
      <h2>Траектории</h2>
      <PlainButton aria-label="Закрепить"><Glyph name="pin" size={7} /></PlainButton>
      <PlainButton aria-label="Закрыть панель"><Stroke d={arrows.close} size={6} /></PlainButton>
    </PanelTitle>
    <PanelBody>
      <PathTop>
        <Glyph name="multi" size={19} />
        <Glyph name="bulbs" size={10} vw={50} />
      </PathTop>
      <PathItem>
        <div><b>1</b><br />ПОЛИ 120x8 Чистовая</div>
        <Glyph name="bulb" size={9} />
      </PathItem>
      <MoveButtons>
        <PlainButton aria-label="Вверх"><Stroke d="M4 7V1M1.500 4 4 1l2.500 3" color="#fff" weight={1.500} /></PlainButton>
        <PlainButton aria-label="Вниз"><Stroke d="M4 1v6M1.500 4 4 7l2.500-3" color="#fff" weight={1.500} /></PlainButton>
      </MoveButtons>
      <OpsHeader>
        Операции с траекторией
        <PlainButton aria-label="Свернуть"><Stroke d="M2 4l2-2 2 2M2 7l2-2 2 2" size={5} /></PlainButton>
      </OpsHeader>
      <ul>
        {operations.map(([icon, text]) => (
          <li key={icon}>
            <OpButton $off={icon === 'stockOff'} disabled={icon === 'stockOff'}><Glyph name={icon} size={20} />{text}</OpButton>
          </li>
        ))}
        <li><OpButton $tight><Glyph name="copyTp" size={16} />Копировать траектории</OpButton></li>
      </ul>
    </PanelBody>
    <Scroll size="142px" />
    <Scroll row size="114px" />
  </ToolpathPanel>
);

/* ---------- toolpath information dialog ---------- */

const Dialog = styled.section`
  position: absolute;
  left: 279px;
  top: 45px;
  width: 304px;
  display: flex;
  flex-direction: column;
  background: #f0f0f0;
  border: 1px solid #8c8f96;
  box-shadow: 1px 2px 6px rgba(0, 0, 0, 0.55);
`;
const DialogTitle = styled.div`
  display: flex;
  justify-content: space-between;
  align-items: center;
  height: 13px;
  padding: 0 5px 0 1px;
  background: #fff;
  font-family: ${segoe};
  h2 {
    font-weight: normal;
  }
`;
const DialogBar = styled.div`
  display: grid;
  grid-template-columns: 28px 60px 31px 28px 39px 48px 26px 35px;
  align-items: center;
  margin: 3px 0 5px 3px;
  white-space: nowrap;
`;
const Report = styled.div`
  display: grid;
  grid-template-columns: 1fr 9px;
  grid-template-rows: 160px 9px;
  margin: 0 5px 4px 2px;
  background: #fff;
  border: 1px solid #8a8d92;
`;
const ReportText = styled.div`
  display: grid;
  grid-auto-rows: 1fr;
  align-items: center;
  padding: 1px 0 0 2px;
  font: 7px/8px "Liberation Mono", "Courier New", monospace;
  color: #333;
  white-space: pre;
`;
const ReportScroll = styled(ScrollTrack)`
  padding: 3px 0;
  ${Thumb} {
    margin-top: 37px;
  }
`;
const DialogFoot = styled.div`
  display: flex;
  justify-content: center;
  padding: 0 38px 3px 0;
`;

const col = (a: string, b: string) => a.padEnd(20) + b;
const report = [
  '-'.repeat(54),
  ' ',
  '1 - ПОЛИ 120x8 Чистовая',
  ' ',
  col('Инструмент:', '[1] 120.0 градус V-Bit 8.000 мм dia.'),
  col('Рабочая подача:', '700.000 мм/мин'),
  'Мин. оптимальной подачи:700.000 мм/мин',
  'Макс. оптимальной подачи:700.000 мм/мин',
  col('Подача врезания:', '50.000 мм/мин'),
  'Высота безопасности по Z:5.000 мм',
  col('Частота вращения', '18000 об/мин'),
  col('Шаг:', '0.130 мм'),
  col('Точность:', '0.100 мм'),
  col('Припуск:', '0.000 мм'),
  col('Точка возврата:', 'X:0.000 Y:0.000 Z:10.000'),
  col('Комментарии:', '1'),
  ' ',
  'Длина рабочей подачи:605127.5 мм',
  'Длина подачи врезания:4323 мм',
];

const ToolpathInfo = () => (
  <Dialog role="dialog" aria-label="Информация о траектории">
    <DialogTitle>
      <h2>Информация о траектории</h2>
      <PlainButton aria-label="Закрыть окно"><Stroke d={arrows.close} size={7} /></PlainButton>
    </DialogTitle>
    <DialogBar>
      <Button $w={25}>охранит</Button>
      <Button $w={24}>Печать</Button>
      <label htmlFor="feed">Быстр. ход</label>
      <Field id="feed" $w={25} defaultValue="3400" />
      <Select flat w={37} value="мм/сек" label="Единицы" />
      <label htmlFor="factor">Коэффициент:</label>
      <Field id="factor" $w={20} defaultValue="1" />
      <Button $w={35}>Вычислить</Button>
    </DialogBar>
    <Report>
      <ReportText role="textbox" aria-readonly="true" aria-multiline="true" aria-label="Отчёт">
        {report.map((line, i) => <div key={i}>{line}</div>)}
      </ReportText>
      <ReportScroll>
        <Stroke d={arrows.up} size={5} weight={1.500} />
        <Thumb $size="67px" />
        <Stroke d={arrows.down} size={5} weight={1.500} />
      </ReportScroll>
      <ScrollTrack $row>
        <Stroke d={arrows.left} size={5} color="#aaa" />
        <Stroke d={arrows.right} size={5} color="#aaa" />
      </ScrollTrack>
      <ScrollTrack />
    </Report>
    <DialogFoot><Button $w={39} $focus>Закрыть</Button></DialogFoot>
  </Dialog>
);

/* ---------- page ---------- */

const groups: [number, string, string[]][] = [
  [213, '', ['newDoc', 'open', 'save', 'cut', 'copy', 'paste', 'undo', 'redo', 'notes']],
  [113, 'Модель', ['redTool', 'redYellow', 'teddy', 'lamp', 'globeBlue']],
  [71, 'Редактирование растра', ['rasterEdit', 'nodes', 'family']],
  [198, 'Создание векторов', ['vectorYellow', 'dots', 'xx', 'curveRing', 'yellowBlob', 'weave', 'nesting', 'greenGrid', 'ringGold']],
  [71, 'Инструменты заливки', ['fillA', 'fillB', 'fillC']],
  [206, 'Имитации', ['sim1', 'sim2', 'sim3', 'sim4', 'sim5', 'sim6', 'sim7', 'sim2', 'sim5']],
];
const groups2: [number, string, string[]][] = [
  [245, '', ['blocks', 'redLeaf', 'purpleStar', 'blocks', 'redLeaf', 'purpleStar', 'join', 'wave', 'cshape', 'blocks', 'join']],
  [225, '', ['goldVec', 'twist', 'nodes', 'dots', 'join', 'wave', 'cshape', 'xx', 'goldVec', 'weave']],
  [210, 'Выравнивание', ['join', 'wave', 'nodes', 'dots', 'cubePink', 'cubePink', 'join', 'wave', 'cshape', 'center']],
];
const palette: string[][] = [
  ['zoom', 'globe'],
  ['pointer', 'pointerGrey', 'transform'],
  ['redPencil', 'paint', 'brush'],
  ['vector', 'rect', 'ellipse', 'polygon', 'arc', 'typeTool'],
  ['drop', 'hand', 'ink', 'knife', 'eraser'],
];

const Groups = ({ items }: { items: [number, string, string[]][] }) => (
  <>
    {items.map(([w, label, icons], i) => (
      <ToolGroup $w={w} key={i}>
        <ToolIcons>{icons.map((n, k) => <PlainButton key={k} aria-label={n}><Glyph name={n} size={15} /></PlainButton>)}</ToolIcons>
        <GroupLabel>{label}</GroupLabel>
      </ToolGroup>
    ))}
  </>
);

export default function App() {
  return (
    <Screen>
      <GlobalStyle />
      <TitleBar>
        <Glyph name="app" size={8} />
        <span>(Без имени) - ArtCAM Jewelsmith</span>
        <WindowButtons>
          <PlainButton aria-label="Свернуть окно"><Stroke d="M1 4h6" /></PlainButton>
          <PlainButton aria-label="Восстановить"><Stroke d="M1 3h4v4H1zM3 3V1h4v4H5" /></PlainButton>
          <PlainButton aria-label="Выход"><Stroke d={arrows.close} size={7} /></PlainButton>
        </WindowButtons>
      </TitleBar>
      <ToolRow $w="872px"><Groups items={groups} /></ToolRow>
      <ToolRow $w="680px"><Groups items={groups2} /></ToolRow>
      <MenuBar>
        <button>Файл</button><button>Правка</button><button>Вид</button>
        <MenuGap />
        <button>Справка</button>
      </MenuBar>
      <Workspace>
        <Palette>
          {palette.map((group, i) => (
            <PaletteGroup key={i}>
              {group.map((n) => <PaletteButton key={n} aria-label={n} $on={n === 'pointer'}><Glyph name={n} size={14} /></PaletteButton>)}
            </PaletteGroup>
          ))}
        </Palette>
        <Document>
          <DocTabs>
            <DocTab>2D Вид - 0</DocTab>
            <TabMenu aria-label="Список окон"><Stroke d="M2 3h4L4 5z" size={6} /></TabMenu>
          </DocTabs>
          <ViewBar>
            <ViewTools>
              <Glyph name="view3d" /><Glyph name="cube" />
              <ViewGap />
              <Glyph name="slab" /><Glyph name="slab" />
            </ViewTools>
          </ViewBar>
          <Canvas>
            <Relief width="480" height="105" viewBox="0 0 480 105">
              <text x="66" y="75" fontFamily="Liberation Serif, Times New Roman, serif" fontSize="56" fill="#b0060c" stroke="#a8060e" strokeWidth=".5">ПЭТЯ АЛЁНА</text>
              <g stroke="#3c3c78" strokeWidth=".7" fill="none">
                <path d="M0 105 67 75M0 105 120 77 317 32M327 32l78 42" />
                <path d="M76 47l17 28M98 47l6 20c3 8 8 9 16 10l16-8M112 46l22 10 17 19h8M147 41l16 34M174 50l-1 25 25-25M194 58l10 18M205 57l22 18" />
                <path d="M230 72l24-35M238 62l20-8M240 63l24 10 12-8M282 42l10 33M298 42l9 33M317 62l-8 12M328 38v22l6 14M322 62l8 12M332 66l4 8" />
                <path d="M351 44l23 31M373 47l9 28M353 44l42 15 12 14M392 60l10-6" />
              </g>
              <g stroke="#5a1a7a" fill="none">
                <path d="M72 42v31M99 42v31M163 42v31M210 42v32M292 42v32M322 42v32M357 42v32M380 42v32M254 40l14 33M408 40l14 33" opacity=".5" />
              </g>
              <path d="M1 105V92" stroke="#43d843" strokeWidth="2" />
              <path d="M0 104h14" stroke="#b04a2a" />
              <circle cx="1" cy="104" r="2" fill="#333" />
            </Relief>
          </Canvas>
          <ColourBar>
            <svg width="21" height="16" viewBox="0 0 21 16" aria-label="Цвета">
              <path d="M9 6h12v10H9z" fill="#fff" />
              <path d="M0 0h13v10H0z" fill="#000" />
              <path d="M15 2h4v3M2 12h4v3" stroke="#222" fill="none" />
            </svg>
            <svg width="60" height="16" viewBox="0 0 60 16" aria-hidden="true"><path d="M0 0h60v16H0z" fill="#000" /></svg>
          </ColourBar>
        </Document>
        <SideTabs>
          <SideTab $h={65}>Инструментарий</SideTab>
          <SideTab $h={98}><Glyph name="note" size={8} />Обучающие руководства</SideTab>
          <SideTab $h={38}><Glyph name="note" size={8} />Live!</SideTab>
        </SideTabs>
      </Workspace>
      <StatusBar>
        <span>X: 1756.876</span><span>Y: 390.753</span><span>Z: 0.000</span><span>W: 1350.780</span><span>H: 182.108</span>
      </StatusBar>
      <TaskBar>
        <TaskButton $w={28} aria-label="Пуск"><Glyph name="start" size={10} /></TaskButton>
        <TaskButton $w={80} $state="open"><Glyph name="chrome" size={12} />Фрезеровка букв у...</TaskButton>
        <TaskButton $w={30} aria-label="Telegram"><Glyph name="telegram" size={12} /></TaskButton>
        <TaskButton $w={22} aria-label="Viber"><Glyph name="viber" size={13} /></TaskButton>
        <TaskButton $w={27} aria-label="Калькулятор"><Glyph name="calcApp" size={12} /></TaskButton>
        <TaskButton $w={83} $state="active"><Glyph name="appLight" size={14} />(Без имени) - ArtC...</TaskButton>
        <Tray>
          <Stroke d={arrows.up} color="#e4e4e4" size={7} />
          <Glyph name="monitor" size={9} />
          <Glyph name="volume" size={9} />
          <Glyph name="keyboard" size={9} vw={28} />
          <span>РУС</span>
          <Clock>17:45<br />09.03.2023</Clock>
          <Glyph name="notice" size={10} />
        </Tray>
      </TaskBar>
      <ReliefProcessing />
      <ToolpathInfo />
      <Toolpaths />
    </Screen>
  );
}
